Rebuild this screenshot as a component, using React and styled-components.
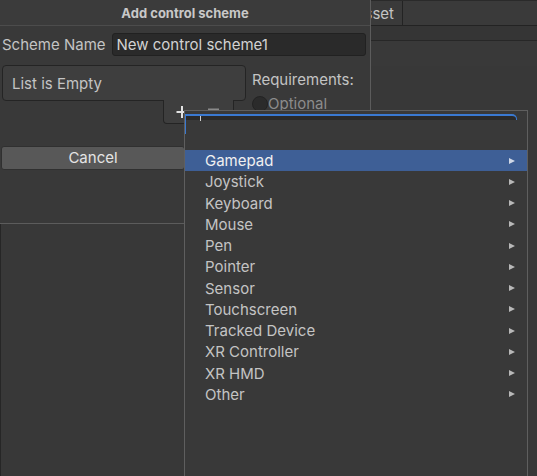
import styled, { createGlobalStyle } from 'styled-components';

const GlobalStyle = createGlobalStyle`
  html, body {
    margin: 0;
    padding: 0;
    background: #383838;
  }
  body {
    font-family: Inter, "Noto Sans", sans-serif;
    color: #c4c4c4;
  }
`;

const devices = [
  'Gamepad',
  'Joystick',
  'Keyboard',
  'Mouse',
  'Pen',
  'Pointer',
  'Sensor',
  'Touchscreen',
  'Tracked Device',
  'XR Controller',
  'XR HMD',
  'Other',
];

const Screen = styled.div`
  position: relative;
  width: 537px;
  height: 476px;
  overflow: hidden;
  background: #383838;
`;

/* editor window behind the dialog */
const Editor = styled.div`
  display: flex;
  flex-direction: column;
  height: 100%;
`;

const TabBar = styled.div`
  display: flex;
  height: 26px;
  background: #3a3a3a;
  border-top: 1px solid #2a2a2a;
  border-bottom: 1px solid #232323;
  box-sizing: border-box;
`;

const Tab = styled.div`
  width: 403px;
  display: flex;
  align-items: center;
  justify-content: flex-end;
  padding-right: 8px;
  box-sizing: border-box;
  border-right: 1px solid #232323;
  font-size: 15px;
  color: #c4c4c4;
`;

const Toolbar = styled.div`
  height: 14px;
  background: #353535;
  border-bottom: 1px solid #272727;
`;

const SubBar = styled.div`
  height: 25px;
  background: #393939;
`;

const Content = styled.div`
  flex: 1;
  background: #383838;
  border-left: 1px solid #262626;
`;

/* the modal dialog */
const Dialog = styled.div`
  position: absolute;
  left: 0;
  top: 0;
  width: 371px;
  height: 224px;
  box-sizing: border-box;
  background: #393939;
  border-right: 1px solid #5c5c5c;
  border-bottom: 1px solid #5c5c5c;
  display: flex;
  flex-direction: column;
`;

const TitleBar = styled.div`
  height: 25px;
  flex-shrink: 0;
  display: flex;
  align-items: center;
  justify-content: center;
  font-size: 13px;
  font-weight: 700;
  color: #c8c8c8;
  border-bottom: 1px solid #4c4c4c;
  background: #3b3b3b;
`;

const Body = styled.div`
  display: flex;
  flex-direction: column;
  padding: 7px 4px 0 2px;
`;

const FieldRow = styled.div`
  display: flex;
  align-items: center;
  gap: 6px;
  height: 23px;
`;

const Label = styled.span`
  font-size: 15px;
  color: #c4c4c4;
  white-space: nowrap;
`;

const TextField = styled.div`
  flex: 1;
  height: 23px;
  box-sizing: border-box;
  background: #2a2a2a;
  border: 1px solid #212121;
  border-radius: 3px;
  display: flex;
  align-items: center;
  padding-left: 4px;
  font-size: 15px;
  color: #d2d2d2;
`;

const ListRow = styled.div`
  display: flex;
  gap: 6px;
  margin-top: 9px;
`;

const ListColumn = styled.div`
  width: 244px;
  display: flex;
  flex-direction: column;
`;

const ListBox = styled.div`
  height: 36px;
  box-sizing: border-box;
  border: 1px solid #242424;
  border-radius: 4px;
  background: #3e3e3e;
  display: flex;
  align-items: center;
  padding-left: 9px;
  font-size: 15px;
`;

const ListFooter = styled.div`
  align-self: flex-end;
  margin-right: 12px;
  margin-top: -1px;
  position: relative;
  z-index: 1;
  width: 71px;
  height: 24px;
  box-sizing: border-box;
  background: #3e3e3e;
  border: 1px solid #242424;
  border-top: none;
  border-radius: 0 0 4px 4px;
  display: flex;
  align-items: flex-start;
  gap: 20px;
  padding: 5px 0 0 12px;
`;

const Requirements = styled.div`
  display: flex;
  flex-direction: column;
  padding-top: 5px;
  gap: 5px;
`;

const RadioRow = styled.div`
  display: flex;
  align-items: center;
  font-size: 15px;
  color: #8c8c8c;
`;

const Radio = styled.span`
  width: 16px;
  height: 16px;
  border-radius: 50%;
  background: #2b2b2b;
  border: 1px solid #232323;
  box-sizing: border-box;
`;

const ButtonRow = styled.div`
  display: flex;
  margin-top: 22px;
  margin-left: -1px;
`;

const Button = styled.div`
  width: 184px;
  height: 24px;
  box-sizing: border-box;
  background: #585858;
  border: 1px solid #303030;
  border-radius: 3px;
  display: flex;
  align-items: center;
  justify-content: center;
  padding-bottom: 1px;
  font-size: 15px;
  color: #e4e4e4;
`;

/* dropdown menu */
const Popup = styled.div`
  position: absolute;
  left: 184px;
  top: 110px;
  width: 344px;
  height: 380px;
  box-sizing: border-box;
  background: #393939;
  border: 1px solid #5f5f5f;
  display: flex;
  flex-direction: column;
  z-index: 5;
`;

const SearchWrap = styled.div`
  margin-top: 3px;
  height: 20px;
  width: 332px;
  border-left: 1px solid #3a79d1;
  box-sizing: border-box;
`;

const SearchField = styled.div`
  position: relative;
  height: 6px;
  box-sizing: border-box;
  background: #2a2a2a;
  border-top: 2px solid #3a79d1;
  border-right: 1px solid #3a79d1;
  border-top-right-radius: 5px;
`;

const Caret = styled.span`
  position: absolute;
  left: 14px;
  top: 0;
  width: 1px;
  height: 5px;
  background: #cfcfcf;
`;

const Header = styled.div`
  height: 16px;
`;

const Items = styled.div`
  display: flex;
  flex-direction: column;
`;

const Item = styled.div`
  height: 21.25px;
  display: flex;
  align-items: center;
  justify-content: space-between;
  padding: 0 12px 0 20px;
  font-size: 15px;
  color: ${(p) => (p.$active ? '#f0f0f0' : '#c4c4c4')};
  background: ${(p) => (p.$active ? '#3e5f96' : 'transparent')};
`;

const Arrow = styled.span`
  width: 0;
  height: 0;
  border-top: 3.5px solid transparent;
  border-bottom: 3.5px solid transparent;
  border-left: 6px solid ${(p) => (p.$active ? '#d0d8e6' : '#b8b8b8')};
`;

const PlusIcon = () => (
  <svg width="12" height="14" viewBox="0 0 12 14">
    <path d="M6 1v12M0.5 7h11" stroke="#e2e2e2" strokeWidth="2" fill="none" />
  </svg>
);

const MinusIcon = () => (
  <svg width="11" height="14" viewBox="0 0 11 14">
    <path d="M0 4.5h11" stroke="#8a8a8a" strokeWidth="2" fill="none" />
  </svg>
);

export default function App() {
  return (
    <>
      <GlobalStyle />
      <Screen>
        <Editor>
          <TabBar>
            <Tab>Input Actions Asset</Tab>
          </TabBar>
          <Toolbar />
          <SubBar />
          <Content />
        </Editor>

        <Dialog>
          <TitleBar>Add control scheme</TitleBar>
          <Body>
            <FieldRow>
              <Label>Scheme Name</Label>
              <TextField>New control scheme1</TextField>
            </FieldRow>
            <ListRow>
              <ListColumn>
                <ListBox>List is Empty</ListBox>
                <ListFooter>
                  <PlusIcon />
                  <MinusIcon />
                </ListFooter>
              </ListColumn>
              <Requirements>
                <Label>Requirements:</Label>
                <RadioRow>
                  <Radio />
                  <span>Optional</span>
                </RadioRow>
              </Requirements>
            </ListRow>
            <ButtonRow>
              <Button>Cancel</Button>
            </ButtonRow>
          </Body>
        </Dialog>

        <Popup>
          <SearchWrap>
            <SearchField>
              <Caret />
            </SearchField>
          </SearchWrap>
          <Header />
          <Items>
            {devices.map((name, i) => (
              <Item key={name} $active={i === 0}>
                <span>{name}</span>
                <Arrow $active={i === 0} />
              </Item>
            ))}
          </Items>
        </Popup>
      </Screen>
    </>
  );
}
